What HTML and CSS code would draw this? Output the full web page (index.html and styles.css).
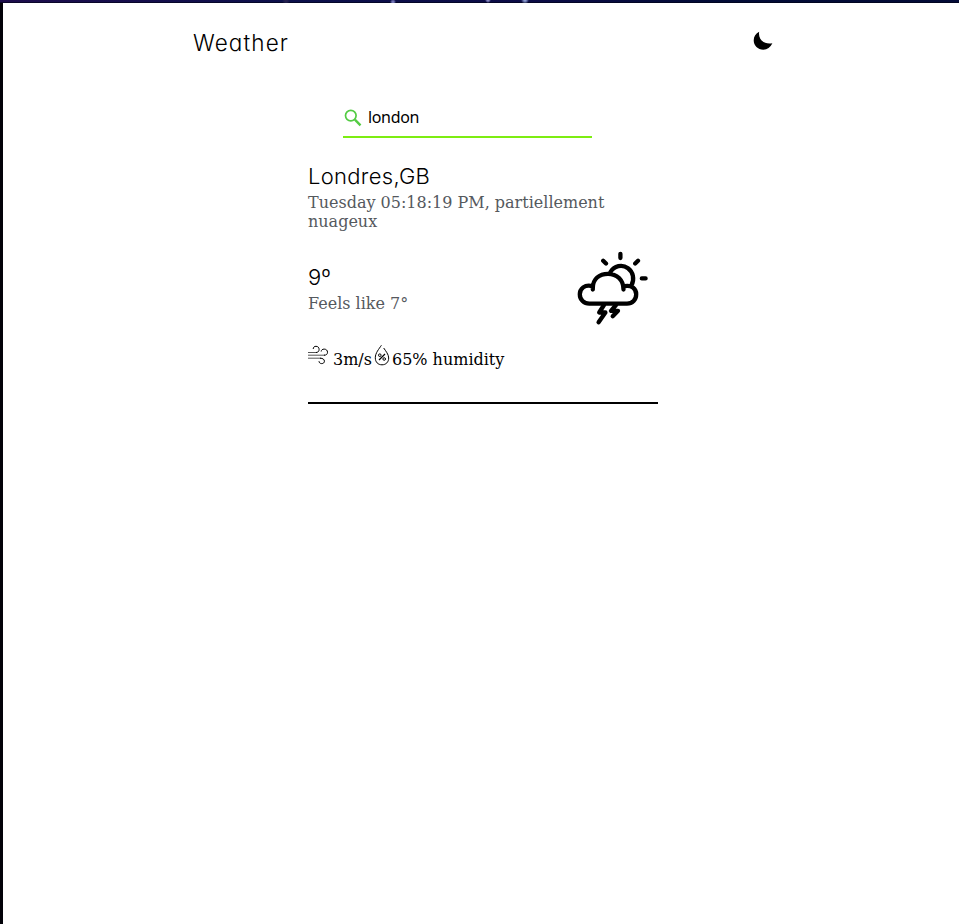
FILE: index.html
```
<!DOCTYPE html>
<html lang="en">
<head>
<meta charset="utf-8">
<title>Weather</title>
<link rel="stylesheet" href="styles.css">
</head>
<body>
<div class="sky"></div>
<div class="page">
  <header class="header">
    <h1 class="title brand">Weather</h1>
    <svg class="moon" viewBox="0 0 20 20"><path d="M6.2 .7C4.8 7.5 10.2 14 19.4 12.3C17.4 16.6 14.2 18.7 10.4 18.7C4.8 18.7.7 14.6.7 9.3C.7 5.4 2.8 2.2 6.2.7Z"/></svg>
  </header>
  <main class="main">
    <div class="search">
      <svg class="lens" viewBox="0 0 18 18"><circle cx="6.8" cy="6.6" r="5.3"/><path class="handle" d="M10.9 10.7L16.5 16.3"/></svg>
      <span class="query">london</span>
    </div>
    <section class="card">
      <h2 class="title city">Londres,GB</h2>
      <p class="muted">Tuesday 05:18:19 PM, partiellement nuageux</p>
      <div class="current">
        <div class="reading">
          <h2 class="title temp">9º</h2>
          <p class="muted">Feels like 7°</p>
        </div>
        <svg class="cloud" viewBox="0 0 85 85">
          <path d="M22.8 44.5V43C22.8 34 29.2 28.8 38 28.8S53.5 35 53.5 44.5M22.8 41.2C14.5 38.8 9.8 44 9.8 49.3C9.8 54.8 14 58.7 19.3 58.7H57C62.4 58.7 66.2 54.7 66.2 49.3C66.2 43.8 61.5 39.6 54.5 41.2M40.5 27C44 20.7 52.3 19 58 23.2C63 26.8 64.8 34 61.5 40.3"/>
          <path d="M50.4 8.8V13M33.2 15.8L36 18.5M68 15.8L65.2 18.5M71.8 33.4H75.6"/>
          <path d="M34 60L29.2 67.5H35.4L28.6 77.2M46 60L41 65.8H48L42.7 71.3"/>
        </svg>
      </div>
      <div class="details">
        <svg class="wind" viewBox="0 0 20 20"><path class="soft" d="M0 7.5H9M0 10.2H17M0 13.2H13"/><path d="M5.2 4C5.2 2 6.5 1.3 8 1.3C10 1.3 11.1 2.7 11.1 4.3C11.1 6.5 9.8 7.5 8 7.5M13.2 6.5C13.2 5 14.5 4.1 16.2 4.1C18.2 4.1 19.5 5.5 19.5 7.2C19.5 9.3 18.3 10.2 16 10.2M12 13.2C15 13.2 16.4 14.5 16.4 16.2C16.4 17.7 15.3 18.6 13.7 18.6C12.1 18.6 11 17.6 11 16.2"/></svg>
        <span class="speed">3m/s</span>
        <svg class="drop" viewBox="0 0 20 22"><path d="M9.4 .3C7 4 3.3 7.9 3.3 12.8C3.3 17.1 6 19.8 10 19.8S16.7 17 16.7 13C16.7 9.4 13.7 6 11.7 3"/><path class="percent" d="M7 15L13 9"/><circle cx="7.8" cy="10.2" r="1.3"/><circle cx="12.2" cy="14" r="1.3"/></svg>
        <span>65% humidity</span>
      </div>
    </section>
  </main>
</div>
</body>
</html>
```
FILE: styles.css
```
* { box-sizing: border-box; }
body {
  margin: 0;
  color: #000;
  background: #fff;
  font: 16px/19px "DejaVu Serif", serif;
}
h1, h2, p { margin: 0; }
svg { display: block; flex: none; fill: none; stroke: #000; }
.sky {
  height: 3px;
  background:
    radial-gradient(circle at 393px 2px, #7273b5 0 1px, transparent 3px),
    radial-gradient(circle at 488px 0, #8585c0 0 1px, transparent 3px),
    radial-gradient(circle at 525px 0, #8b9bd0 0 1px, transparent 4px),
    radial-gradient(circle at 286px 1px, #24204e 0 1px, transparent 4px),
    linear-gradient(transparent 2px, rgba(0, 0, 18, .6) 2px),
    linear-gradient(90deg, #1d0c4c, #0c104b 30%, #0b0b46 55%, #010b36 75%, #030b37);
}
.page {
  height: 921px;
  border-left: 3px solid #020108;
}
.header {
  display: flex;
  justify-content: space-between;
  width: 580px;
  margin-left: 190px;
  padding-top: 23px;
}
.title {
  font: 300 22px/34px Inter, "Open Sans", sans-serif;
  font-feature-settings: "cv11";
}
.brand { font-size: 22.5px; letter-spacing: 1.1px; }
.moon { width: 20px; height: 20px; margin-top: 5px; fill: #000; stroke: none; }
.main { width: 350px; margin-left: 305px; }
.search {
  display: flex;
  width: 249px;
  height: 34px;
  margin: 44px 0 0 35px;
  border-bottom: 2px solid #7ded12;
}
.lens { width: 18px; height: 18px; margin: 5px 0 0 1px; stroke: #53cb43; stroke-width: 1.7; }
.handle { stroke-width: 2.4; }
.query { margin: 2px 0 0 6px; font: 16px/22px "Noto Sans", sans-serif; letter-spacing: -.35px; }
.card { padding-top: 21px; height: 266px; border-bottom: 2px solid #000; }
.city { letter-spacing: .3px; }
.muted { color: #55595e; }
.current { display: flex; justify-content: space-between; height: 85px; margin-top: 14px; }
.reading { padding-top: 15px; }
.cloud { width: 85px; height: 85px; margin-right: 3px; stroke-width: 4.3; stroke-linecap: round; stroke-linejoin: round; }
.details { display: flex; margin-top: 15px; line-height: 29px; }
.wind { width: 20px; height: 20px; margin-right: 5px; stroke-width: 1; }
.soft { stroke: #555; }
.drop { width: 20px; height: 22px; stroke-width: 1; }
.percent { stroke-width: 1.3; }
```
